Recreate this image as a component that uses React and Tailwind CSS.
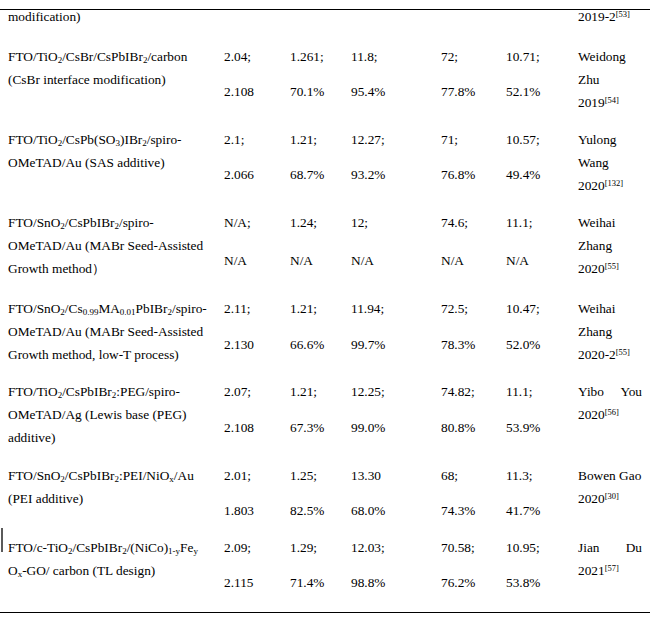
import React from 'react';

const Sb = ({ children }) => <sub className="text-[9px]">{children}</sub>;
const Rf = ({ children }) => <sup className="text-[8.5px]">{children}</sup>;

const colWidths = ['w-[66px]', 'w-[61px]', 'w-[90px]', 'w-[65px]', 'w-[72px]'];

const rows = [
  {
    mt: 'mt-[21px]',
    gap: 'mt-[12px]',
    device: [
      <>FTO/TiO<Sb>2</Sb>/CsBr/CsPbIBr<Sb>2</Sb>/carbon</>,
      <>(CsBr interface modification)</>,
    ],
    v1: ['2.04;', '1.261;', '11.8;', '72;', '10.71;'],
    v2: ['2.108', '70.1%', '95.4%', '77.8%', '52.1%'],
    author: [<>Weidong</>, <>Zhu</>, <>2019<Rf>[54]</Rf></>],
  },
  {
    mt: 'mt-[14px]',
    gap: 'mt-[12px]',
    device: [
      <>FTO/TiO<Sb>2</Sb>/CsPb(SO<Sb>3</Sb>)IBr<Sb>2</Sb>/spiro-</>,
      <>OMeTAD/Au (SAS additive)</>,
    ],
    v1: ['2.1;', '1.21;', '12.27;', '71;', '10.57;'],
    v2: ['2.066', '68.7%', '93.2%', '76.8%', '49.4%'],
    author: [<>Yulong</>, <>Wang</>, <>2020<Rf>[132]</Rf></>],
  },
  {
    mt: 'mt-[14px]',
    gap: 'mt-[15px]',
    device: [
      <>FTO/SnO<Sb>2</Sb>/CsPbIBr<Sb>2</Sb>/spiro-</>,
      <>OMeTAD/Au (MABr Seed-Assisted</>,
      <>Growth method）</>,
    ],
    v1: ['N/A;', '1.24;', '12;', '74.6;', '11.1;'],
    v2: ['N/A', 'N/A', 'N/A', 'N/A', 'N/A'],
    author: [<>Weihai</>, <>Zhang</>, <>2020<Rf>[55]</Rf></>],
  },
  {
    mt: 'mt-[17px]',
    gap: 'mt-[13px]',
    device: [
      <>FTO/SnO<Sb>2</Sb>/Cs<Sb>0.99</Sb>MA<Sb>0.01</Sb>PbIBr<Sb>2</Sb>/spiro-</>,
      <>OMeTAD/Au (MABr Seed-Assisted</>,
      <>Growth method, low-T process)</>,
    ],
    v1: ['2.11;', '1.21;', '11.94;', '72.5;', '10.47;'],
    v2: ['2.130', '66.6%', '99.7%', '78.3%', '52.0%'],
    author: [<>Weihai</>, <>Zhang</>, <>2020-2<Rf>[55]</Rf></>],
  },
  {
    mt: 'mt-[14px]',
    gap: 'mt-[13px]',
    device: [
      <>FTO/TiO<Sb>2</Sb>/CsPbIBr<Sb>2</Sb>:PEG/spiro-</>,
      <>OMeTAD/Ag (Lewis base (PEG)</>,
      <>additive)</>,
    ],
    v1: ['2.07;', '1.21;', '12.25;', '74.82;', '11.1;'],
    v2: ['2.108', '67.3%', '99.0%', '80.8%', '53.9%'],
    author: [<span className="flex justify-between"><span>Yibo</span><span>You</span></span>, <>2020<Rf>[56]</Rf></>],
  },
  {
    mt: 'mt-[15px]',
    gap: 'mt-[12px]',
    device: [
      <>FTO/SnO<Sb>2</Sb>/CsPbIBr<Sb>2</Sb>:PEI/NiO<Sb>x</Sb>/Au</>,
      <>(PEI additive)</>,
    ],
    v1: ['2.01;', '1.25;', '13.30', '68;', '11.3;'],
    v2: ['1.803', '82.5%', '68.0%', '74.3%', '41.7%'],
    author: [<>Bowen Gao</>, <>2020<Rf>[30]</Rf></>],
  },
  {
    mt: 'mt-[14px]',
    gap: 'mt-[12px]',
    mark: true,
    device: [
      <>FTO/c-TiO<Sb>2</Sb>/CsPbIBr<Sb>2</Sb>/(NiCo)<Sb>1-y</Sb>Fe<Sb>y</Sb></>,
      <>O<Sb>x</Sb>-GO/ carbon (TL design)</>,
    ],
    v1: ['2.09;', '1.29;', '12.03;', '70.58;', '10.95;'],
    v2: ['2.115', '71.4%', '98.8%', '76.2%', '53.8%'],
    author: [<span className="flex justify-between"><span>Jian</span><span>Du</span></span>, <>2021<Rf>[57]</Rf></>],
  },
];

function Row({ row }) {
  return (
    <div className={`relative flex pl-[8px] ${row.mt}`}>
      {/* change bar in the margin */}
      {row.mark && <div className="absolute left-[1px] top-[-8px] h-[24px] w-[2px] bg-[#5a5a5a]" />}
      <div className="w-[216px]">
        {row.device.map((line, i) => (
          <div key={i} className="leading-[23px] whitespace-nowrap">{line}</div>
        ))}
      </div>
      {colWidths.map((w, i) => (
        <div key={i} className={w}>
          <div className="leading-[23px]">{row.v1[i]}</div>
          <div className={`leading-[23px] ${row.gap}`}>{row.v2[i]}</div>
        </div>
      ))}
      <div className="w-[64px]">
        {row.author.map((line, i) => (
          <div key={i} className="leading-[23px] whitespace-nowrap">{line}</div>
        ))}
      </div>
    </div>
  );
}

export default function App() {
  return (
    <div className="w-[654px] h-[621px] overflow-hidden bg-white text-[13.33px] text-black font-['Liberation_Serif',serif]">
      <div className="pt-[9px]">
        <div className="h-[1px] w-[650px] bg-black" />
        {/* tail of the previous row */}
        <div className="flex pl-[8px] leading-[14px]">
          <div className="w-[570px]">modification)</div>
          <div>2019-2<Rf>[53]</Rf></div>
        </div>
        {rows.map((row, i) => (
          <Row key={i} row={row} />
        ))}
        <div className="mt-[18px] h-[1px] w-[650px] bg-black" />
      </div>
    </div>
  );
}
